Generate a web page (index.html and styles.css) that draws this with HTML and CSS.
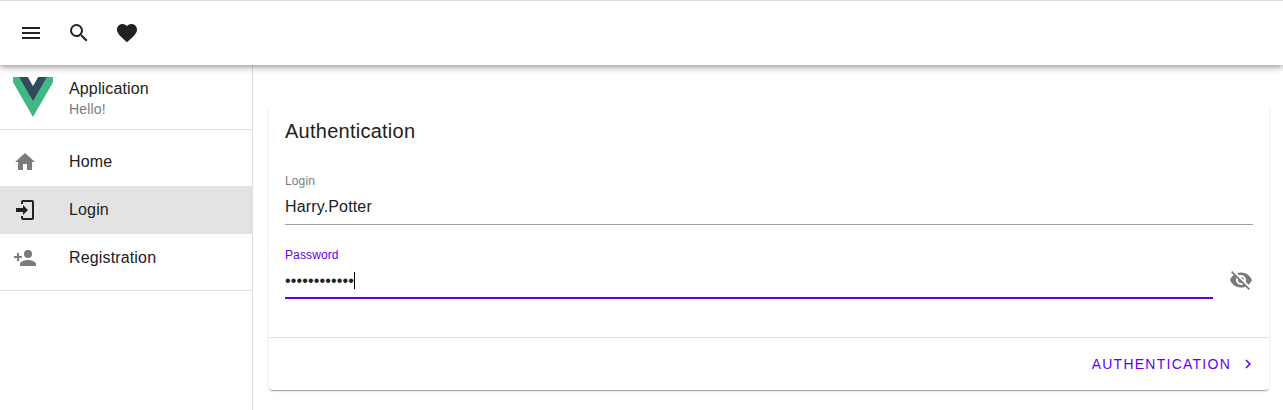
FILE: index.html
```html
<!DOCTYPE html>
<html lang="en">
<head>
<meta charset="utf-8">
<title>Authentication</title>
<link rel="stylesheet" href="styles.css">
</head>
<body>
<header class="toolbar">
  <svg class="icon" viewBox="0 0 24 24"><path d="M3,6H21V8H3V6M3,11H21V13H3V11M3,16H21V18H3V16Z"/></svg>
  <svg class="icon" viewBox="0 0 24 24"><path d="M9.5,3A6.5,6.5 0 0,1 16,9.5C16,11.11 15.41,12.59 14.44,13.73L14.71,14H15.5L20.5,19L19,20.5L14,15.5V14.71L13.73,14.44C12.59,15.41 11.11,16 9.5,16A6.5,6.5 0 0,1 3,9.5A6.5,6.5 0 0,1 9.5,3M9.5,5C7,5 5,7 5,9.5C5,12 7,14 9.5,14C12,14 14,12 14,9.5C14,7 12,5 9.5,5Z"/></svg>
  <svg class="icon" viewBox="0 0 24 24"><path d="M12,21.35L10.55,20.03C5.4,15.36 2,12.27 2,8.5C2,5.41 4.42,3 7.5,3C9.24,3 10.91,3.81 12,5.08C13.09,3.81 14.76,3 16.5,3C19.58,3 22,5.41 22,8.5C22,12.27 18.6,15.36 13.45,20.03L12,21.35Z"/></svg>
</header>
<div class="layout">
  <nav class="drawer">
    <div class="brand">
      <svg class="brand-logo" viewBox="0 0 261.76 226.69" preserveAspectRatio="xMidYMid slice"><path fill="#41b883" d="M161.1 0L130.87 52.35 100.65 0H0L130.87 226.69 261.75 0Z"/><path fill="#34495e" d="M161.1 0L130.87 52.35 100.65 0H52.35L130.87 136.01 209.4 0Z"/></svg>
      <div class="brand-text">
        <div class="brand-name">Application</div>
        <div class="brand-note">Hello!</div>
      </div>
    </div>
    <ul class="menu">
      <li class="menu-item"><svg class="icon muted" viewBox="0 0 24 24"><path d="M10,20V14H14V20H19V12H22L12,3L2,12H5V20H10Z"/></svg>Home</li>
      <li class="menu-item active"><svg class="icon" viewBox="0 0 24 24"><path d="M10,2H19A2,2 0 0,1 21,4V20A2,2 0 0,1 19,22H10A2,2 0 0,1 8,20V18H10V20H19V4H10V6H8V4A2,2 0 0,1 10,2M3,10H10V7L15,12L10,17V14H3Z"/></svg>Login</li>
      <li class="menu-item"><svg class="icon muted" viewBox="0 0 24 24"><path d="M15,14C12.33,14 7,15.33 7,18V20H23V18C23,15.33 17.67,14 15,14M6,10V7H4V10H1V12H4V15H6V12H9V10M15,12A4,4 0 0,0 19,8A4,4 0 0,0 15,4A4,4 0 0,0 11,8A4,4 0 0,0 15,12Z"/></svg>Registration</li>
    </ul>
  </nav>
  <main class="content">
    <section class="card">
      <h1 class="card-title">Authentication</h1>
      <div class="fields">
        <div class="field">
          <div class="label">Login</div>
          <div class="value">Harry.Potter</div>
        </div>
        <div class="password-row">
          <div class="field focused">
            <div class="label">Password</div>
            <div class="value secret">••••••••••••<span class="caret"></span></div>
          </div>
          <svg class="icon muted" viewBox="0 0 24 24"><path d="M11.83,9L15,12.16C15,12.11 15,12.05 15,12A3,3 0 0,0 12,9C11.94,9 11.89,9 11.83,9M7.53,9.8L9.08,11.35C9.03,11.56 9,11.77 9,12A3,3 0 0,0 12,15C12.22,15 12.44,14.97 12.65,14.92L14.2,16.47C13.53,16.8 12.79,17 12,17A5,5 0 0,1 7,12C7,11.21 7.2,10.47 7.53,9.8M2,4.27L4.28,6.55L4.73,7C3.08,8.3 1.78,10 1,12C2.73,16.39 7,19.5 12,19.5C13.55,19.5 15.03,19.2 16.38,18.66L16.81,19.08L19.73,22L21,20.73L3.27,3M12,7A5,5 0 0,1 17,12C17,12.64 16.87,13.26 16.64,13.82L19.57,16.75C21.07,15.5 22.27,13.86 23,12C21.27,7.61 17,4.5 12,4.5C10.6,4.5 9.26,4.75 8,5.2L10.17,7.35C10.74,7.13 11.35,7 12,7Z"/></svg>
        </div>
      </div>
      <div class="actions">
        <span class="button">Authentication</span>
        <svg class="icon small" viewBox="0 0 24 24"><path d="M8.59,16.58L13.17,12L8.59,7.41L10,6L16,12L10,18L8.59,16.58Z"/></svg>
      </div>
    </section>
  </main>
</div>
</body>
</html>
```
FILE: styles.css
```css
* { box-sizing: border-box; }
body {
  margin: 0;
  height: 410px;
  display: flex;
  flex-direction: column;
  overflow: hidden;
  background: #fff;
  color: #212121;
  font-family: "Liberation Sans", Arial, sans-serif;
  font-size: 16px;
}
.icon { width: 24px; height: 24px; flex: none; fill: currentColor; }
.muted { color: #7b7b7b; }
.small { width: 18px; height: 18px; }
.toolbar {
  position: relative;
  z-index: 1;
  flex: none;
  height: 65px;
  border-top: 1px solid #dcdcdc;
  background: #fff;
  display: flex;
  align-items: center;
  gap: 24px;
  padding: 0 19px;
  box-shadow: 0 2px 4px -1px rgba(0,0,0,.2), 0 4px 5px 0 rgba(0,0,0,.14), 0 1px 10px 0 rgba(0,0,0,.12);
}
.layout { flex: 1; display: flex; }
.drawer { width: 253px; flex: none; border-right: 1px solid #dedede; }
.brand {
  height: 65px;
  display: flex;
  align-items: flex-start;
  gap: 16px;
  padding: 12px 13px 0;
  border-bottom: 1px solid #e0e0e0;
}
.brand-logo { width: 40px; height: 40px; }
.brand-name { line-height: 24px; letter-spacing: .15px; }
.brand-note { font-size: 14px; line-height: 16px; letter-spacing: .18px; color: #7b7b7b; }
.menu {
  list-style: none;
  margin: 0;
  padding: 8px 0;
  border-bottom: 1px solid #e0e0e0;
}
.menu-item {
  height: 48px;
  display: flex;
  align-items: center;
  gap: 32px;
  padding: 0 13px;
  letter-spacing: .15px;
}
.active { background: #e3e3e3; }
.content { flex: 1; padding: 40px 14px 20px 16px; }
.card {
  height: 285px;
  border-radius: 4px;
  display: flex;
  flex-direction: column;
  box-shadow: 0 2px 1px -1px rgba(0,0,0,.2), 0 1px 1px 0 rgba(0,0,0,.14), 0 1px 3px 0 rgba(0,0,0,.12);
}
.card-title {
  margin: 0;
  padding: 10px 16px 0;
  font-size: 20px;
  line-height: 32px;
  font-weight: 400;
  letter-spacing: .25px;
}
.fields { flex: 1; padding: 26px 16px 0; }
.field { flex: 1; height: 52px; border-bottom: 1px solid #9e9e9e; }
.label { font-size: 12px; line-height: 16px; letter-spacing: .12px; color: #7b7b7b; }
.value { line-height: 24px; padding-top: 6px; letter-spacing: .15px; }
.password-row { display: flex; gap: 16px; margin-top: 22px; }
.password-row .icon { margin-top: 21px; }
.focused { border-bottom: 2px solid #6200ee; }
.focused .label { color: #6200ee; }
.secret { display: flex; align-items: center; }
.caret { width: 1px; height: 17px; margin-bottom: 2px; background: #000; }
.actions {
  height: 53px;
  border-top: 1px solid #e0e0e0;
  display: flex;
  align-items: center;
  justify-content: flex-end;
  gap: 8px;
  padding: 0 12px;
  color: #6200ee;
}
.button { font-size: 14px; letter-spacing: 1.25px; text-transform: uppercase; }
```
